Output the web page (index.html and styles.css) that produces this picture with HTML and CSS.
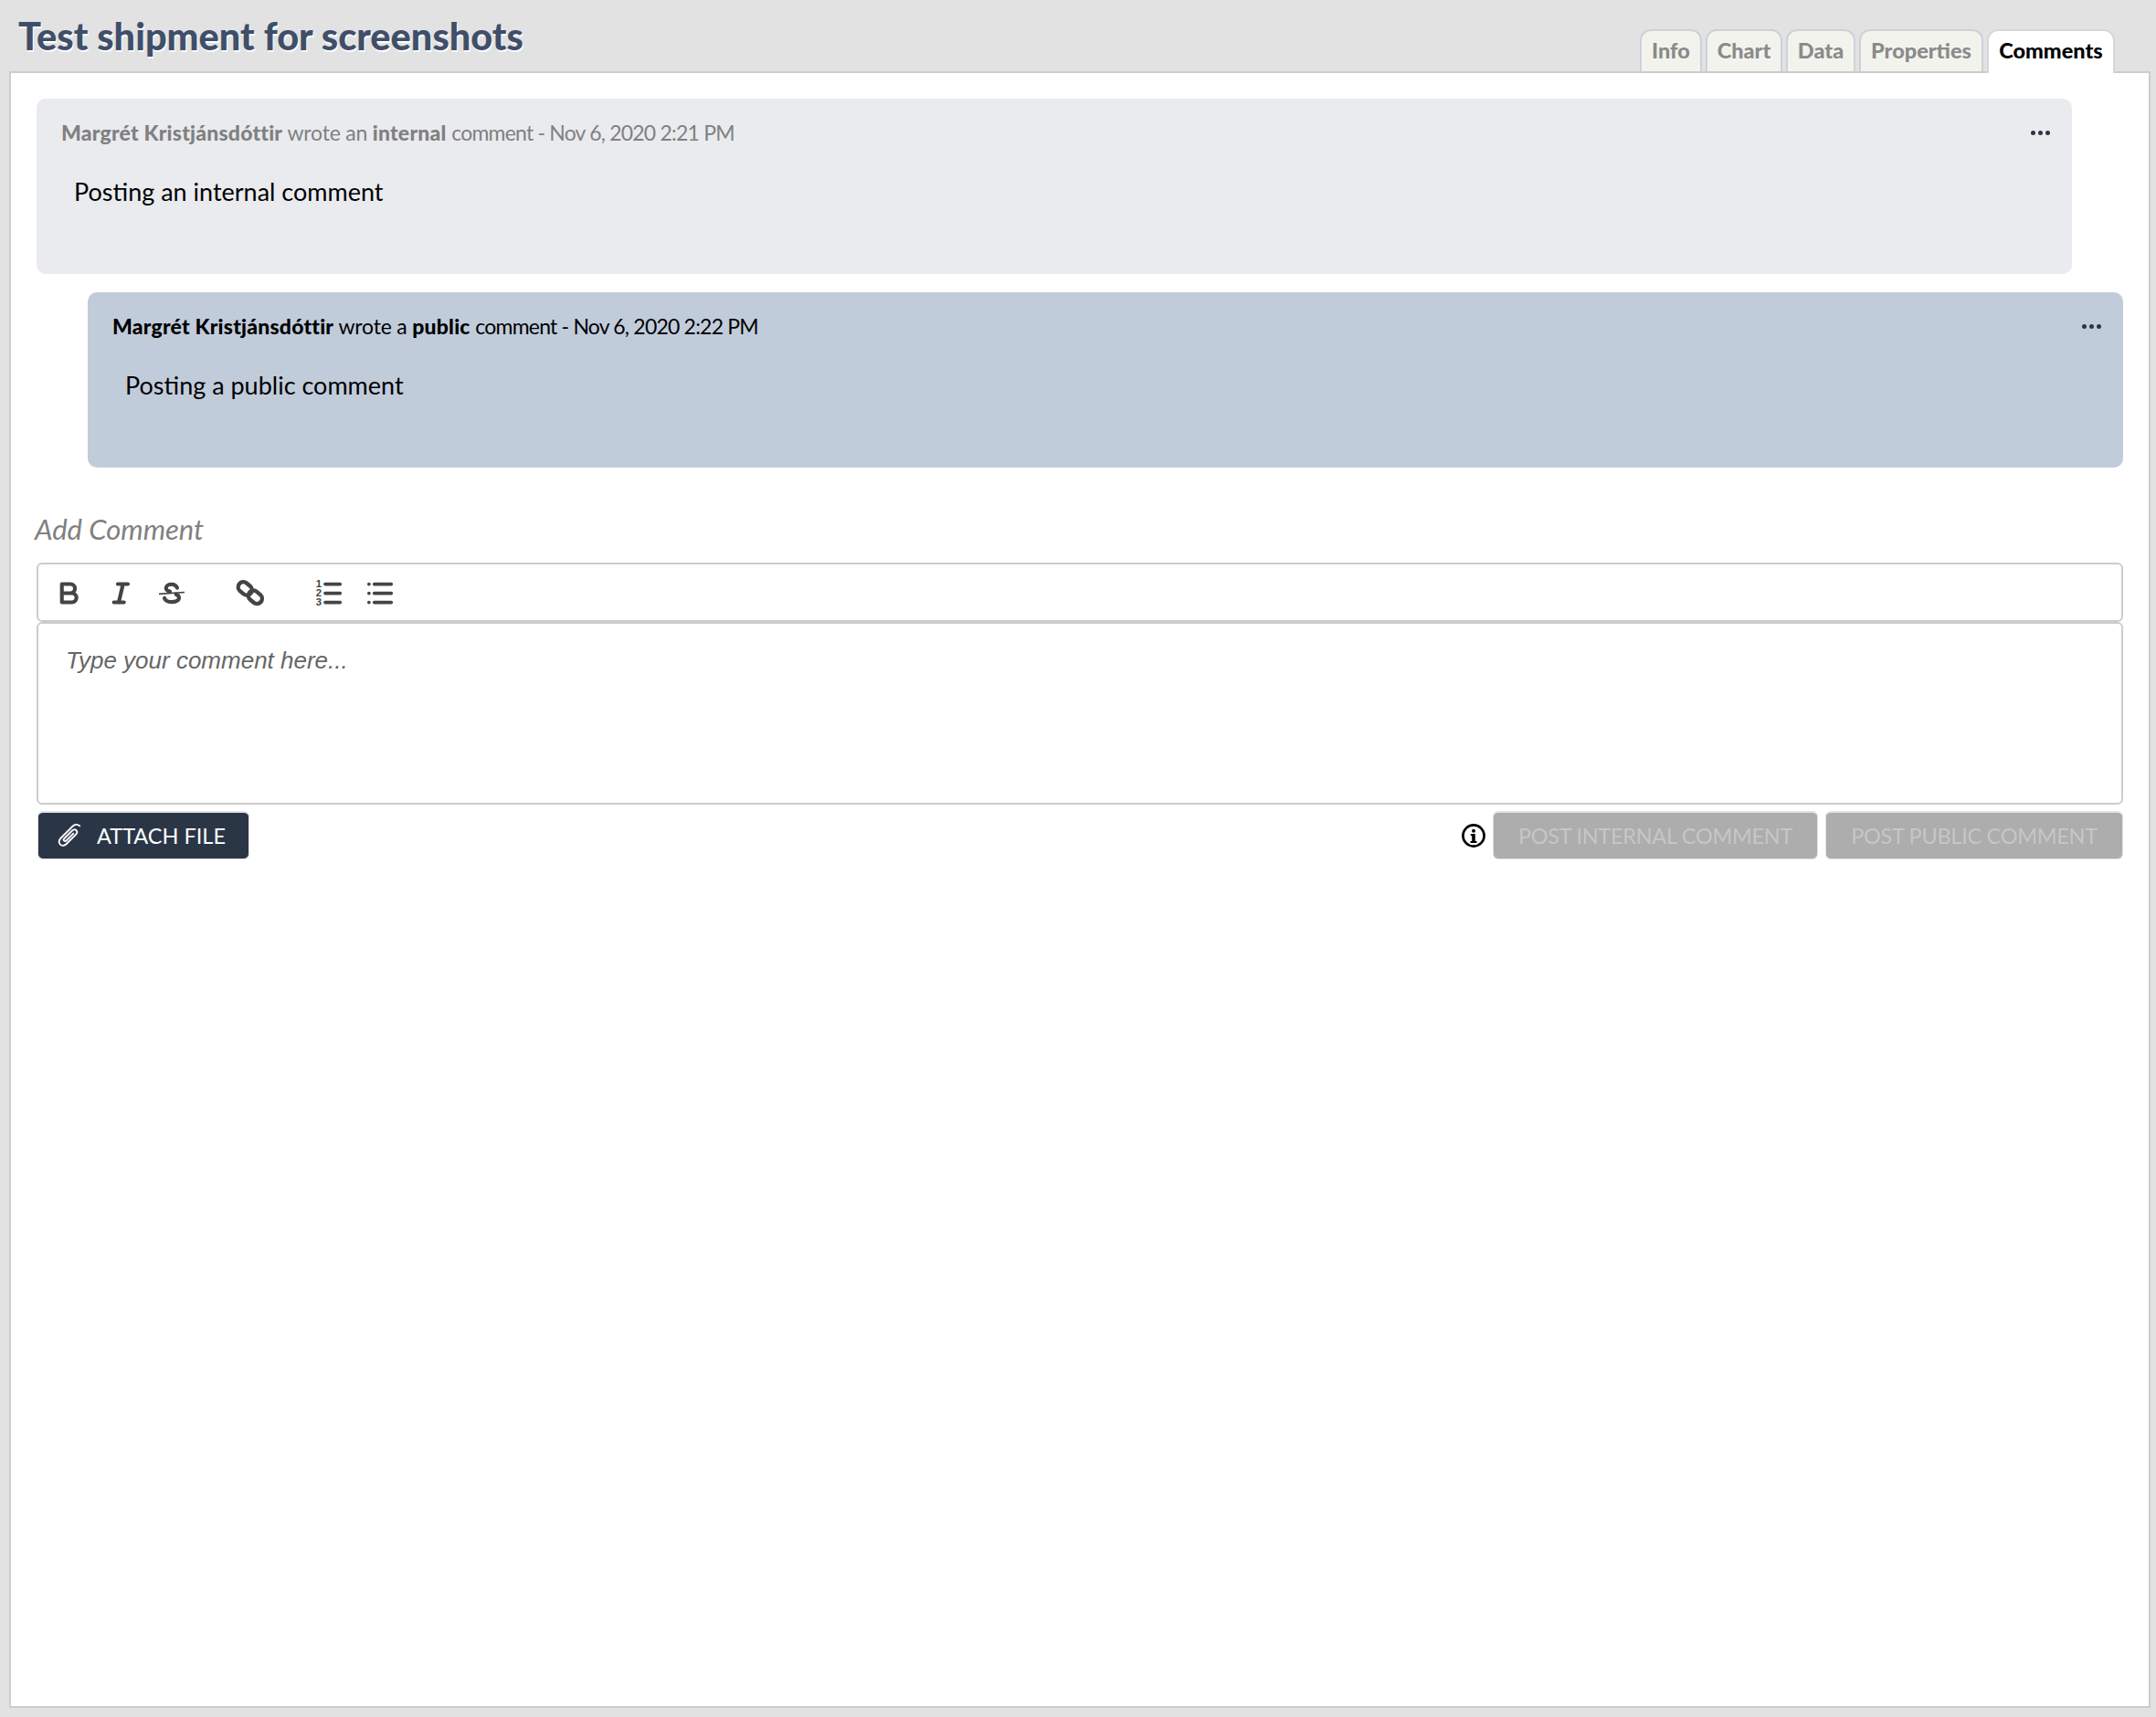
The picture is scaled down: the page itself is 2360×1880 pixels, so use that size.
FILE: index.html
```html
<!DOCTYPE html>
<html lang="en">
<head>
  <meta charset="UTF-8">
  <title>Test shipment for screenshots</title>
  <link rel="stylesheet" href="styles.css">
</head>
<body>
  <!-- Header with title and tabs -->
  <header class="top-bar">
    <h1 class="page-title">Test shipment for screenshots</h1>
    <nav class="tabs">
      <a class="tab tab-info">Info</a>
      <a class="tab tab-chart">Chart</a>
      <a class="tab tab-data">Data</a>
      <a class="tab tab-props">Properties</a>
      <a class="tab tab-comments tab-active">Comments</a>
    </nav>
  </header>
  <main class="panel">
    <!-- Comment list -->
    <article class="comment comment-internal">
      <div class="comment-head">
        <span><b>Margrét Kristjánsdóttir</b> wrote an <b>internal</b> <span class="when">comment - Nov 6, 2020 2:21 PM</span></span>
        <span class="dots"><i></i><i></i><i></i></span>
      </div>
      <p class="comment-body">Posting an internal comment</p>
    </article>
    <article class="comment comment-public">
      <div class="comment-head">
        <span><b>Margrét Kristjánsdóttir</b> wrote a <b>public</b> <span class="when">comment - Nov 6, 2020 2:22 PM</span></span>
        <span class="dots"><i></i><i></i><i></i></span>
      </div>
      <p class="comment-body">Posting a public comment</p>
    </article>
    <!-- Comment form -->
    <h2 class="form-title">Add Comment</h2>
    <div class="toolbar">
      <div class="tool-group">
        <svg class="tool" viewBox="0 0 24 24"><path class="ln" d="M5.800 4.900h7a3.750 3.750 0 0 1 0 7.500H5.800zM5.800 12.400H14a3.750 3.750 0 0 1 0 7.500H5.800z"/></svg>
        <svg class="tool" viewBox="0 0 24 24"><path class="ln" d="M9.700 4.900H18M6.500 19.900h8.300M14 4.900 10.500 19.900"/></svg>
        <svg class="tool" viewBox="0 0 24 24"><path class="ln" d="M16.500 8C15.500 6 14 5.100 12 5.100 9.200 5.100 7.300 6.300 7.300 8.200 7.300 9.700 8.800 10.800 10.500 11M15.500 13.300C17.300 14 18 15 18 16.200 18 18.500 15.300 19.600 12 19.600 9 19.600 6.800 18.500 6 16.500"/><path class="thin" d="M1.500 13 22.500 11.600"/></svg>
      </div>
      <div class="tool-group">
        <svg class="tool" viewBox="0 0 24 24"><g class="ln ln-link"><rect x="1.600" y="4.400" width="12.200" height="8.400" rx="4.200" transform="rotate(40 7.700 8.600)"/><rect x="9.900" y="11.400" width="12.200" height="8.400" rx="4.200" transform="rotate(40 16 15.600)"/></g></svg>
      </div>
      <div class="tool-group">
        <svg class="tool" viewBox="0 0 24 24"><path class="ln ln-bar" d="M9 4.900h12.200M9 12.400h12.200M9 19.900h12.200"/><text class="num" x="1.300" y="7.800">1</text><text class="num" x="1.300" y="15.300">2</text><text class="num" x="1.300" y="22.800">3</text></svg>
        <svg class="tool" viewBox="0 0 24 24"><path class="ln ln-bar" d="M7.300 4.900h13.900M7.300 12.400h13.900M7.300 19.900h13.900"/><circle cx="2.900" cy="4.900" r="1.400"/><circle cx="2.900" cy="12.400" r="1.400"/><circle cx="2.900" cy="19.900" r="1.400"/></svg>
      </div>
    </div>
    <div class="editor">Type your comment here...</div>
    <div class="form-actions">
      <button class="btn btn-dark">
        <svg class="clip" viewBox="0 0 24 24"><path d="M21 3.500c-1.800-1.800-4.400-1.500-6.200.3L4.400 14.200c-1.700 1.700-2 4-.5 5.500s3.800 1.200 5.500-.5l8.300-8.300c1.100-1.100 1.300-2.600.3-3.600s-2.500-.8-3.600.3l-7 7c-.6.6-.6 1.400-.1 1.900s1.300.5 1.900-.1l6.300-6.300" fill="none" stroke="#fff" stroke-width="1.500" stroke-linecap="round"/></svg>
        ATTACH FILE
      </button>
      <div class="post-actions">
        <svg class="info" viewBox="0 0 28 28"><circle cx="14" cy="14" r="11.600" fill="none" stroke="#000" stroke-width="2.600"/><circle cx="14" cy="8.700" r="2"/><path d="M10.800 12h5v8h1.700v2h-7v-2h1.700v-6h-1.400z"/></svg>
        <button class="btn btn-disabled btn-internal" disabled>POST INTERNAL COMMENT</button>
        <button class="btn btn-disabled btn-public" disabled>POST PUBLIC COMMENT</button>
      </div>
    </div>
  </main>
</body>
</html>
```

FILE: styles.css
```css
html, body { margin:0; padding:0; }
body {
  width: 2360px; height: 1880px;
  background: #e2e2e2;
  font-family: Lato, "Noto Sans", Arial, sans-serif;
  display: flex; flex-direction: column;
  overflow: hidden;
}
/* Top bar */
.top-bar {
  height: 78px;
  display: flex; justify-content: space-between; align-items: flex-end;
  padding: 0 45px 0 20px;
  position: relative;
  z-index: 2;
}
.page-title {
  margin: 0 0 18px;
  font-size: 41.500px; line-height: 42px; font-weight: 900;
  color: #3f4f69;
  text-shadow: 1px 2px 0 #fff;
}
.tabs { display: flex; gap: 4px; }
.tab {
  height: 46px;
  box-sizing: border-box;
  padding-bottom: 2px;
  display: flex; align-items: center; justify-content: center;
  background: #f3f3ee;
  border: 2px solid #ccd2da;
  border-bottom: 0;
  border-radius: 12px 12px 0 0;
  font-size: 23.500px; font-weight: 900;
  color: #8a8a8a;
}
.tab-info { width: 68px; }
.tab-chart { width: 84px; }
.tab-data { width: 76px; }
.tab-props { width: 136px; }
.tab-comments { width: 140px; }
.tab-active {
  background: #fff;
  color: #000;
  height: 48px; margin-bottom: -2px;
  padding-bottom: 4px;
  border-color: #d4d8de;
}
/* Main white panel */
.panel {
  margin: 0 6px 10px 10px;
  flex: 1;
  background: #fff;
  border: 2px solid #ccc;
  padding: 28px 26px 0 28px;
}
.comment {
  width: 2228px; height: 192px;
  box-sizing: border-box;
  border-radius: 10px;
  padding: 22px 26px 0 27px;
}
.comment-internal { background: #e9ebef; color: #808080; }
.comment-public { background: #c1ccdb; color: #000; margin: 20px 0 0 56px; }
.comment-head {
  display: flex; justify-content: space-between; align-items: center;
  font-size: 23px; line-height: 30px;
  letter-spacing: -0.2px;
}
.comment-head b { font-weight: 900; letter-spacing: 0.2px; }
.when { letter-spacing: -0.8px; }
.dots { display: flex; gap: 3px; margin-right: -2px; }
.dots i { width: 5px; height: 5px; border-radius: 50%; background: #2a3646; }
.comment-body {
  margin: 32px 0 0 14px;
  font-size: 27px; line-height: 36px;
  color: #000;
}
.form-title {
  margin: 47px 0 17px -2px;
  font-size: 31px; line-height: 40px; font-weight: 400; font-style: italic;
  color: #808080;
}
/* Editor */
.toolbar {
  width: 2284px; height: 65px;
  box-sizing: border-box;
  border: 2px solid #ccc;
  border-radius: 6px;
  display: flex; align-items: center; gap: 54px;
  padding: 0 18px;
}
.tool-group { display: flex; gap: 24px; }
.tool { width: 32px; height: 32px; fill: #444; display: block; }
.ln { fill: none; stroke: #444; stroke-width: 3.100; stroke-linecap: round; stroke-linejoin: round; }
.ln-link { stroke-width: 3.300; }
.ln-bar { stroke-width: 2.800; }
.thin { fill: none; stroke: #444; stroke-width: 1.200; }
.num { font-family: "Liberation Sans", Arial, sans-serif; font-size: 8.500px; font-weight: 700; fill: #444; }
.editor {
  width: 2284px; height: 200px;
  box-sizing: border-box;
  border: 2px solid #ccc;
  border-radius: 6px;
  padding: 24px 30px;
  font-family: "Liberation Sans", Arial, sans-serif;
  font-style: italic; font-size: 26px; line-height: 32px;
  color: #666;
}
.form-actions {
  width: 2283px;
  margin: 7px 0 0 1px;
  display: flex; justify-content: space-between; align-items: center;
}
.post-actions { display: flex; align-items: center; gap: 8px; }
.btn {
  height: 53px;
  box-sizing: border-box;
  border: solid #e2e2e2;
  border-width: 2px 1px 1px;
  border-radius: 6px;
  font-family: inherit;
  font-size: 23.500px;
  display: flex; align-items: center; justify-content: center;
  padding: 0 0 1px;
}
.btn-dark { width: 232px; background: #2a3646; color: #fff; gap: 15px; justify-content: flex-start; padding-left: 19px; }
.btn-disabled { background: #adadad; color: #c6c6c6; letter-spacing: -0.28px; }
.btn-internal { width: 356px; }
.btn-public { width: 326px; }
.clip { width: 30px; height: 30px; }
.info { width: 28px; height: 28px; margin-right: -1px; }
```
